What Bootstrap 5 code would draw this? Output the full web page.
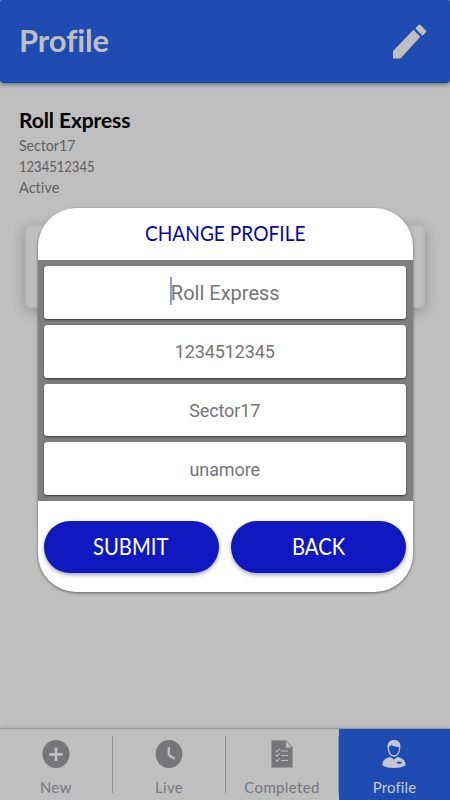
<!DOCTYPE html>
<html lang="en">
<head>
<meta charset="utf-8">
<meta name="viewport" content="width=device-width, initial-scale=1">
<title>Profile</title>
<link href="https://cdn.jsdelivr.net/npm/bootstrap@5.3.0/dist/css/bootstrap.min.css" rel="stylesheet">
<style>
  body { width: 450px; height: 800px; background: #bfbfbf; font-family: Lato, "Open Sans", sans-serif; font-variant-ligatures: none; overflow: hidden; }
  .app-bar { height: 83px; background: #1f4cb2; border-bottom: 1px solid #0a43b8; border-radius: 2px 2px 4px 4px; box-shadow: 0 1px 5px rgba(0,0,0,.5); padding: 0 23px 0 19px; color: #bfbfbf; }
  .app-title { font-size: 31px; line-height: 36px; font-weight: 700; margin: -2px 0 0; letter-spacing: -.1px; }
  .account { padding: 25px 19px 0; font-size: 15.5px; line-height: 21px; color: #606060; }
  .account h2 { font-size: 21px; line-height: 24px; font-weight: 700; color: #000; margin: 0 0 3px; letter-spacing: -.1px; }
  .account div { transform-origin: left; }
  .account .place { transform: scaleX(.91); }
  .account .phone { transform: scaleX(.84); }
  .account .state { transform: scaleX(.94); }
  .info-panel { height: 83px; margin: 27px 25px 0; border: 2px solid #b9b9b9; border-radius: 6px; background: #bfbfbf; box-shadow: 0 3px 14px rgba(0,0,0,.27); }
  .tab-bar { height: 72px; border-top: 1px solid #989898; box-shadow: 0 -1px 4px rgba(0,0,0,.08); color: #75757a; font-size: 15px; }
  .tab { width: 113px; padding: 11px 2px 0 0; line-height: 20px; }
  .tab svg { margin-bottom: 9px; }
  .tab span { letter-spacing: .35px; padding-left: 1px; }
  .tab + .tab::before { content: ""; position: absolute; left: -1px; top: 7px; width: 1px; height: 57px; background: #929292; }
  .tab-on { background: #1f4cb2; color: #c6c8cf; width: 111px; padding-right: 1px; }
  .tab-on span { letter-spacing: .1px; }
  .dialog-box { left: 37.5px; top: 208px; width: 375px; height: 384px; border-radius: 38px; background: #fff; box-shadow: 0 1px 3px rgba(0,0,0,.5); }
  .dialog-head { height: 52px; font-size: 21.5px; color: #0505b5; padding-bottom: 2px; }
  .dialog-head span { transform: scaleX(.89); }
  .fields { height: 241px; background: #7f7f7f; padding: 6px 6.5px 6px 6px; gap: 6px; }
  .fields .form-control { flex: 1 1 0; min-height: 0; border: 0; border-radius: 3px; padding: 1px 0 0; font-family: Roboto, sans-serif; font-size: 18px; letter-spacing: -.1px; color: #757575; box-shadow: 0 1px 2px rgba(0,0,0,.6); }
  .fields .form-control.name-field { font-size: 20px; letter-spacing: 0; }
  .caret { width: 2px; height: 28px; background: #8f9bd0; margin: -3px -1px 0 0; }
  .actions { padding: 19.5px 6.5px 0 6px; gap: 12.5px; }
  .actions .btn { height: 52px; padding: 0 0 2px; border: 0; border-radius: 26px; background: #1018c0; color: #fff; font-size: 24px; box-shadow: 0 2px 4px rgba(0,0,0,.35); }
  .actions .btn span { display: inline-block; transform: scaleX(.845); }
</style>
<script src="https://cdn.jsdelivr.net/npm/bootstrap@5.3.0/dist/js/bootstrap.bundle.min.js"></script>
</head>
<body class="d-flex flex-column position-relative m-0">
  <header class="app-bar d-flex align-items-center justify-content-between flex-shrink-0">
    <h1 class="app-title">Profile</h1>
    <svg width="35" height="35" viewBox="0 0 35 35" fill="#bfbfbf"><path d="M1 27 21.500 5.700 28.300 12.700 8.500 34.500H1ZM23.300 4.200 26.300 1.200Q27.500 0 28.700 1.200L33.700 6.200Q34.900 7.400 33.700 8.600L30.500 11.700Z"/></svg>
  </header>
  <main class="flex-grow-1">
    <section class="account">
      <h2>Roll Express</h2>
      <div class="place">Sector17</div>
      <div class="phone">1234512345</div>
      <div class="state">Active</div>
    </section>
    <div class="info-panel"></div>
  </main>
  <nav class="tab-bar d-flex flex-shrink-0">
    <div class="tab position-relative d-flex flex-column align-items-center">
      <svg width="28" height="28" viewBox="0 0 28 28"><ellipse cx="14" cy="14" rx="13.500" ry="14" fill="#75757a"/><path d="M14 7.500v13.500M7.300 14.300h13.400" stroke="#bfbfbf" stroke-width="2.700"/></svg>
      <span>New</span>
    </div>
    <div class="tab position-relative d-flex flex-column align-items-center">
      <svg width="28" height="28" viewBox="0 0 28 28"><ellipse cx="14" cy="14" rx="13.300" ry="14" fill="#75757a"/><path d="M13.800 7v8l6 3.800" fill="none" stroke="#bfbfbf" stroke-width="2.300"/></svg>
      <span>Live</span>
    </div>
    <div class="tab position-relative d-flex flex-column align-items-center">
      <svg width="22" height="28" viewBox="0 0 22 28"><path d="M.5.500H15L21.500 7.500V27.500H.5Z" fill="#75757a"/><path d="M14.500.500V8H21.500Z" fill="#c1c1c1" stroke="#75757a" stroke-width=".8"/><path d="M10 11h7M10 15.500h7M10 20.500h7M4.500 10.500l1.500 1.300 2.500-3M4.500 15l1.500 1.300 2.500-3M4.500 20l1.500 1.300 2.500-3" fill="none" stroke="#bfbfbf" stroke-width="1.100"/></svg>
      <span>Completed</span>
    </div>
    <div class="tab tab-on position-relative d-flex flex-column align-items-center">
      <svg width="24" height="28" viewBox="0 0 24 28"><path d="M8.300 17C2.500 18.500.5 20 .5 25.500Q5 28 12 28T23.500 25.500C23.500 20 21 18.500 15.700 17L12 19.500Z" fill="#c6c8cf"/><path d="M6.300 7.500C6.300 3 8.500.800 12 .800S17.700 3 17.700 7.500C17.700 12.500 15.500 16 12 16S6.300 12.500 6.300 7.500Z" fill="#1f4cb2" stroke="#c6c8cf" stroke-width="1.300"/><path d="M5.600 7.500C5.200 2.500 8 0 12 0S18.800 2.500 18.400 7C14 7 12 6.500 9.500 5Q8.500 5.500 5.600 7.500Z" fill="#c6c8cf"/><path d="M15 21.700h4.800v1.200q-2.400 1.800-4.800 0Z" fill="#1f4cb2"/></svg>
      <span>Profile</span>
    </div>
  </nav>

  <div class="dialog-box position-absolute overflow-hidden" role="dialog">
    <div class="dialog-head d-flex align-items-center justify-content-center"><span>CHANGE PROFILE</span></div>
    <div class="fields d-flex flex-column">
      <div class="form-control name-field d-flex align-items-center justify-content-center"><span class="caret"></span>Roll Express</div>
      <div class="form-control d-flex align-items-center justify-content-center">1234512345</div>
      <div class="form-control d-flex align-items-center justify-content-center">Sector17</div>
      <div class="form-control d-flex align-items-center justify-content-center">unamore</div>
    </div>
    <div class="actions d-flex">
      <button class="btn flex-fill w-50"><span>SUBMIT</span></button>
      <button class="btn flex-fill w-50"><span>BACK</span></button>
    </div>
  </div>
</body>
</html>
